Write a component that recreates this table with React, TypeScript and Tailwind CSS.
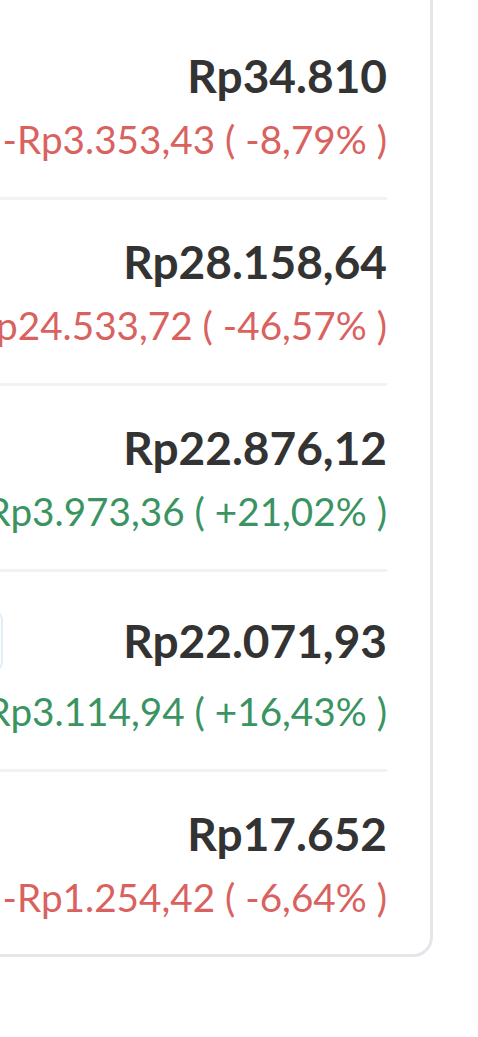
type Holding = {
  id: string;
  value: string;
  change: string;
  up: boolean;
  tag?: boolean;
};

const holdings: Holding[] = [
  { id: "a", value: "Rp34.810", change: "-Rp3.353,43 ( -8,79% )", up: false },
  { id: "b", value: "Rp28.158,64", change: "-Rp24.533,72 ( -46,57% )", up: false },
  { id: "c", value: "Rp22.876,12", change: "+Rp3.973,36 ( +21,02% )", up: true },
  { id: "d", value: "Rp22.071,93", change: "+Rp3.114,94 ( +16,43% )", up: true, tag: true },
  { id: "e", value: "Rp17.652", change: "-Rp1.254,42 ( -6,64% )", up: false },
];

function HoldingRow({ h, last }: { h: Holding; last: boolean }) {
  return (
    <div
      className={`flex flex-col pt-[36px] ${
        last ? "pb-[35px]" : "pb-[36px] border-b-[3px] border-[#f2f2f3]"
      }`}
    >
      {/* top line: name / badge on the left (outside the visible area), value on the right */}
      <div className="flex items-center">
        <div className="flex-1 min-w-0">
          {h.tag && (
            <div className="my-[2px] h-[62px] w-[443px] rounded-[10px] border-[2px] border-[#e3edf6] bg-[#fbfdff]" />
          )}
        </div>
        <p className="shrink-0 whitespace-nowrap text-[46px] leading-[52px] font-bold text-[#333333]">
          {h.value}
        </p>
      </div>
      <div className="flex justify-end">
        <p
          className={`mt-[15px] whitespace-nowrap text-[38.7px] leading-[44px] ${
            h.up ? "text-[#3a9462]" : "text-[#d9625f]"
          }`}
        >
          {h.change}
        </p>
      </div>
    </div>
  );
}

export default function App() {
  return (
    <div
      className="w-[478px] h-[1037px] overflow-hidden bg-white flex justify-end items-start pr-[45px]"
      style={{ fontFamily: "Lato, 'Open Sans', sans-serif" }}
    >
      <div className="w-[900px] shrink-0 -mt-[100px] bg-white border-[3px] border-[#e4e6ea] rounded-[20px] pl-[24px] pr-[43px]">
        {/* header area above the fold */}
        <div className="h-[111px]" />
        {holdings.map((h, i) => (
          <HoldingRow key={h.id} h={h} last={i === holdings.length - 1} />
        ))}
      </div>
    </div>
  );
}
